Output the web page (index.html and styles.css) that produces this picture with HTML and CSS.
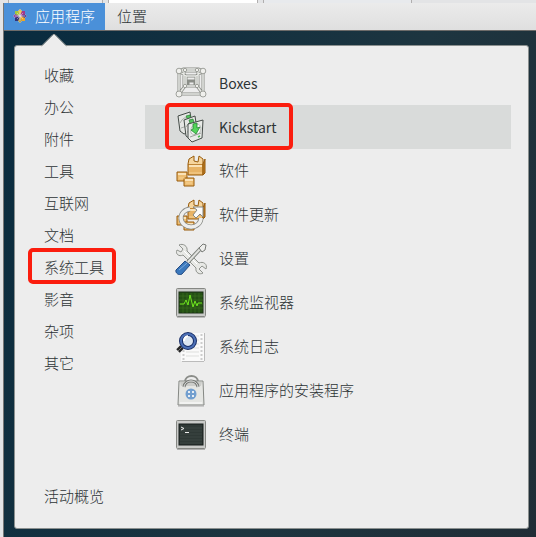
FILE: index.html
```html
<!DOCTYPE html>
<html lang="zh-CN">
<head>
<meta charset="utf-8">
<meta name="viewport" content="width=device-width, initial-scale=1">
<title>应用程序</title>
<link rel="stylesheet" href="styles.css">
</head>
<body>
<div class="tabs" aria-hidden="true"><span class="tab tab-first"></span><span class="tab tab-active"></span><span class="tab tab-third"></span><span class="tab-rest"></span></div>
<div class="desktop">
  <header class="topbar">
    <button type="button" class="menu-button active">
      <svg class="logo" width="14" height="14" viewBox="0 0 14 14" aria-hidden="true">
        <path d="M7 0l2 2h3v3l2 2-2 2v3H9l-2 2-2-2H2V9L0 7l2-2V2h3z" fill="#d8cfe0"/>
        <path d="M2 2h4.500v4.500H2z" fill="#a5c93c"/><path d="M7.500 2H12v4.500H7.500z" fill="#a3388e"/>
        <path d="M2 7.500h4.500V12H2z" fill="#343276"/><path d="M7.500 7.500H12V12H7.500z" fill="#efa724"/>
        <path d="M7 0l2 2.500-2 3-2-3z" fill="#e5c24a"/><path d="M14 7l-2.500 2-3-2 3-2z" fill="#5b458e"/>
        <path d="M7 14l-2-2.500 2-3 2 3z" fill="#b9a047"/><path d="M0 7l2.500-2 3 2-3 2z" fill="#8f4aa0"/>
        <path d="M7 2v10M2 7h10M4 4l6 6M10 4l-6 6" stroke="#e6dfea" stroke-width=".5"/>
      </svg>
      <span>应用程序</span>
    </button>
    <button type="button" class="menu-button">位置</button>
  </header>
  <main class="popover">
    <svg class="arrow" width="26" height="13" viewBox="0 0 26 13" aria-hidden="true"><path d="M1 12L12 1h2l11 11v1H1z" fill="#ededed"/><path d="M0 12.500L12 .5h2l12 12" fill="none" stroke="#9a9d9b"/></svg>
    <nav class="categories">
      <button type="button">收藏</button>
      <button type="button">办公</button>
      <button type="button">附件</button>
      <button type="button">工具</button>
      <button type="button">互联网</button>
      <button type="button">文档</button>
      <button type="button" class="marked">系统工具</button>
      <button type="button">影音</button>
      <button type="button">杂项</button>
      <button type="button">其它</button>
      <button type="button" class="overview">活动概览</button>
    </nav>
    <section class="apps">
      <button type="button">
        <svg width="32" height="32" viewBox="0 0 32 32" aria-hidden="true">
          <g fill="none" stroke="#8b8e88" stroke-width="3"><path d="M4 4h24v23H4zM9 2h14v17H9zM4 4l5-2M28 4l-5-2M4 27l6-8M28 27l-6-8M4 4l7 5M28 4l-7 5M11 9h10v10H11zM13 14h7v5h-7z"/></g>
          <g fill="none" stroke="#e9eae6" stroke-width="1.500"><path d="M4 4h24v23H4zM9 2h14v17H9zM4 4l5-2M28 4l-5-2M4 27l6-8M28 27l-6-8M4 4l7 5M28 4l-7 5M11 9h10v10H11z"/></g>
          <g fill="#f0f0ed" stroke="#8b8e88" stroke-width=".8"><circle cx="4" cy="4" r="2.800"/><circle cx="28" cy="4" r="2.800"/><circle cx="4" cy="27" r="3"/><circle cx="28" cy="27" r="3"/><circle cx="10" cy="3" r="1.700"/><circle cx="22" cy="3" r="1.700"/><circle cx="10" cy="19" r="1.700"/><circle cx="22" cy="19" r="1.700"/></g>
        </svg>
        <span class="latin">Boxes</span>
      </button>
      <button type="button" class="selected marked">
        <svg width="32" height="32" viewBox="0 0 32 32" aria-hidden="true">
          <g stroke="#454c48" stroke-linejoin="round">
            <path d="M3 5l12-4 3 19-9 3-4-3z" fill="#e4e6e3"/><path d="M5 12q4-8 10-4M6 17l6-2" fill="none" stroke="#a5aaa5"/><path d="M11 5l4-1 1 4-3 1z" fill="#55c65c" stroke="#287c33" stroke-width=".7"/>
            <path d="M9 9l11-4 3 20-8 3-4-3z" fill="#e4e6e3"/><path d="M11 16q4-7 9-4M12 21l5-1" fill="none" stroke="#a5aaa5"/><path d="M14 9l4-1 1 4 2 0-3 4-5-3 2-1z" fill="#55c65c" stroke="#287c33" stroke-width=".7"/>
            <path d="M13 13l15-4-1 18-10 4-4-4z" fill="#e9ebe8"/><path d="M16 22c-2-9 9-12 10-5 0 7-7 8-10 5z" fill="#fafafa" stroke="#b5bab5"/><path d="M15 26l11-4" stroke="#969c97"/>
          </g>
          <path d="M18 13l4-1v5l3-1-4 7-5-4 2-1z" fill="#54d45a" stroke="#258332" stroke-width=".8"/><path d="M23 26l2-1" stroke="#49b94f" stroke-width="1.500"/>
        </svg>
        <span class="latin">Kickstart</span>
      </button>
      <button type="button">
        <svg width="32" height="32" viewBox="0 0 32 32" aria-hidden="true"><use href="#boxes"/></svg>
        <span>软件</span>
      </button>
      <button type="button">
        <svg width="32" height="32" viewBox="0 0 32 32" aria-hidden="true"><use href="#boxes"/>
          <path d="M26 19a10 9 0 1 1-11-9" fill="none" stroke="#858783" stroke-width="5"/>
          <path d="M26 19a10 9 0 1 1-11-9" fill="none" stroke="#eeeeec" stroke-width="3.500"/>
          <path d="M18 8h10v10l-3-3-4 4-3-3 4-5z" fill="#fafafa" stroke="#858783"/>
        </svg>
        <span>软件更新</span>
      </button>
      <button type="button">
        <svg width="32" height="32" viewBox="0 0 32 32" aria-hidden="true">
          <path d="M4 2l4 4-2 3-4-2C0 11 4 14 8 12l13 13c-1 5 4 7 7 5l-4-4 3-3 4 3c2-5-3-8-7-6L12 8C13 3 8 0 4 2z" fill="#e8e9e6" stroke="#90938e"/>
          <path d="M9 8l13 13" stroke="#fff"/><path d="M13 19L26 5" stroke="#7c807b" stroke-width="4"/><path d="M13 19L26 5" stroke="#e1e2df" stroke-width="2"/>
          <path d="M24 5l4-4 3 1-1 5-3 2z" fill="#eeeeec" stroke="#777a76"/>
          <path d="M10 18l5 4-8 9c-3 2-7-1-6-4z" fill="#3b78bc" stroke="#234b83"/><path d="M4 27l8-7" stroke="#7ba9dc"/>
        </svg>
        <span>设置</span>
      </button>
      <button type="button">
        <svg width="32" height="32" viewBox="0 0 32 32" aria-hidden="true">
          <rect x="1.500" y="1.500" width="29" height="28" rx="1" fill="#c9cac8" stroke="#858783"/><path d="M2 30.500h28" stroke="#bbb"/><rect x="4" y="5" width="24" height="21" fill="#245014" stroke="#1b2e16"/>
          <path d="M8 6v20M12 6v20M16 6v20M20 6v20M24 6v20M4 9h24M4 13h24M4 17h24M4 21h24" stroke="#3d721f" stroke-width=".6"/>
          <path d="M5 17h4l2-4 2 5 2-10 3 12 2-6 2 5 1-3h4" fill="none" stroke="#6ee51e"/>
        </svg>
        <span>系统监视器</span>
      </button>
      <button type="button">
        <svg width="32" height="32" viewBox="0 0 32 32" aria-hidden="true">
          <path d="M6 2h23v28H6z" fill="#fafafa"/><path d="M29.500 2v28M7 30.500h22" stroke="#bbb"/><path d="M8.500 3v27M26.500 3v27" stroke="#ccc" stroke-width="2" stroke-dasharray="2 2"/><path d="M11 5h13M11 9h13M11 13h13M11 17h13M11 21h13M11 25h13" stroke="#dedfdd"/>
          <path d="M7 16l-4 4" stroke="#252525" stroke-width="5"/><path d="M7 16l-4 4" stroke="#777" stroke-width="1"/>
          <circle cx="13" cy="10" r="7" fill="#dce6f2" stroke="#172d67" stroke-width="4"/><circle cx="13" cy="10" r="7" fill="none" stroke="#4c70b6" stroke-width="2"/><path d="M9 10q0-4 4-5" fill="none" stroke="#fff" stroke-width="2"/>
        </svg>
        <span>系统日志</span>
      </button>
      <button type="button">
        <svg width="32" height="32" viewBox="0 0 32 32" aria-hidden="true">
          <path d="M10 7c0-8 13-8 13 0" fill="none" stroke="#8b8d89" stroke-width="2"/>
          <path d="M4 6h24l1 24H3z" fill="#e5e6e3" stroke="#858884"/><path d="M5 7h22l-1 4H6z" fill="#cccdca"/><path d="M5 28h22" stroke="#fff"/><path d="M3 31h26" stroke="#aaa"/>
          <path d="M9 12c1-8 13-8 14 0" fill="none" stroke="#777a76" stroke-width="3"/><path d="M9 12c1-8 13-8 14 0" fill="none" stroke="#eee"/>
          <circle cx="16" cy="19" r="5.500" fill="#729fcf"/><path d="M13 16h2v2h-2zM17 16h2v2h-2zM13 20h2v2h-2zM17 20h2v2h-2z" fill="#e7edf3"/>
        </svg>
        <span>应用程序的安装程序</span>
      </button>
      <button type="button">
        <svg width="32" height="32" viewBox="0 0 32 32" aria-hidden="true">
          <rect x="1.500" y="1.500" width="29" height="28" rx="1" fill="#c9cac8" stroke="#858783"/><path d="M2 30.500h28" stroke="#b1b1b1"/><rect x="4" y="5" width="24" height="21" fill="#2f3936" stroke="#171c1a"/><path d="M5 9h22M5 12h22M5 15h22M5 18h22M5 21h22M5 24h22" stroke="#3c4743"/>
          <path d="M6 8l3 1.500L6 11M10 13.500h4" fill="none" stroke="#eee"/>
        </svg>
        <span>终端</span>
      </button>
    </section>
  </main>
</div>
<svg class="symbols" aria-hidden="true">
  <symbol id="boxes" viewBox="0 0 32 32">
    <g stroke="#985b0b" stroke-linejoin="round"><path d="M13 9h15v11H13z" fill="#e8b365"/><path d="M13 9l1-5 5-3v5l4 1 1-6 4 3v5" fill="#f6d59d"/><path d="M28 9l2-5v14l-2 2z" fill="#bd7e28"/><path d="M2 17h10v9H2z" fill="#edbd72"/><path d="M9 23h10v8H9z" fill="#edbd72"/></g>
    <path d="M14 11h13M3 19h8M10 25h8" stroke="#fae2b7" stroke-width="2"/><path d="M14 18h13M4 23h6M11 28h6" stroke="#f7d294"/>
  </symbol>
</svg>
</body>
</html>
```
FILE: styles.css
```css
*,
*::after { box-sizing: border-box; }

body {
  margin: 0;
  min-height: 100vh;
  display: flex;
  flex-direction: column;
  background: #e3e4e6;
  color: #2e3436;
  font: 300 15px/20px "Noto Sans CJK SC", sans-serif;
}

button {
  border: 0;
  padding: 0;
  background: none;
  color: inherit;
  font: inherit;
  text-align: left;
}

.tabs {
  display: flex;
  gap: 5px;
  height: 3px;
  padding-left: 8px;
}

.tab {
  border: solid #b0aeae;
  border-width: 0 1px;
  background: #e8eaed;
}

.tab-first { width: 95px; }
.tab-active { width: 150px; background: #fff; }
.tab-third { width: 149px; }

.desktop {
  flex: 1;
  display: flex;
  flex-direction: column;
  margin-left: 3px;
  border-left: 1px solid #777;
  background: linear-gradient(110deg, #082b3f, #1d3540 60%, #202d36);
}

.topbar {
  display: flex;
  height: 28px;
  border-bottom: 1px solid #6d6b69;
  background: linear-gradient(#ebebeb, #dfdfdf);
}

.menu-button {
  display: flex;
  align-items: center;
  gap: 8px;
  padding: 0 12px 2px;
}

.menu-button.active {
  padding: 0 10px 2px 9px;
  background: #4a90d9;
  color: #fff;
}

.popover {
  position: relative;
  flex: 1;
  display: flex;
  margin: 14px 7px 8px 10px;
  padding: 13px 17px 16px 0;
  border: 1px solid #8b908f;
  border-radius: 3px;
  background: #ededed;
}

.arrow {
  position: absolute;
  left: 26px;
  top: -12px;
}

.categories {
  width: 130px;
  display: flex;
  flex-direction: column;
}

.categories button {
  position: relative;
  height: 32px;
  padding-left: 29px;
}

.categories .overview { margin-top: auto; }

.apps {
  flex: 1;
  padding-top: 2px;
}

.apps button {
  position: relative;
  display: flex;
  align-items: center;
  gap: 12px;
  width: 100%;
  height: 44px;
  padding-left: 30px;
}

.apps span { padding-bottom: 2px; }

.apps .latin {
  padding: 0;
  font-size: 14px;
  font-weight: 400;
}

.apps .selected { background: #d9dbda; }

.marked::after {
  content: "";
  position: absolute;
  border: 4px solid #fb1d0e;
  border-radius: 5px;
}

.categories .marked::after {
  inset: -3px 29px -1px 13px;
}

.apps .marked::after {
  left: 20px;
  top: -2px;
  width: 128px;
  height: 47px;
}

.symbols {
  position: absolute;
  width: 0;
  height: 0;
}
```
